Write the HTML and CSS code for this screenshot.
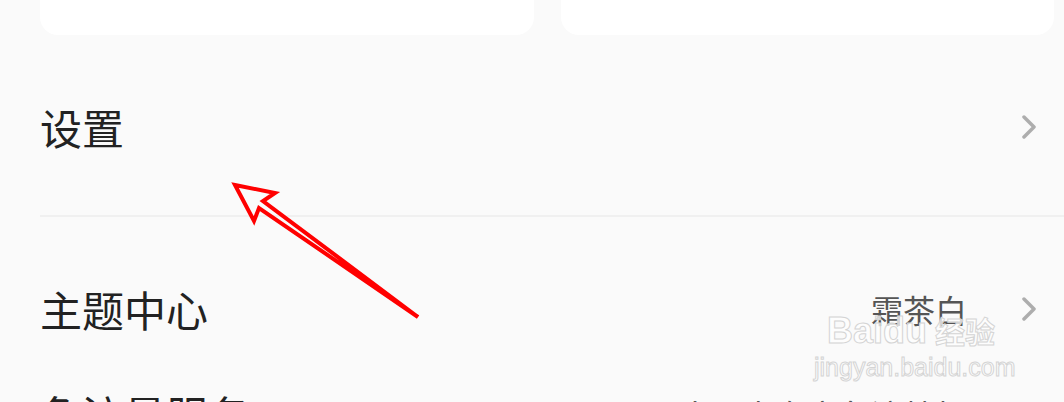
FILE: index.html
```html
<!DOCTYPE html>
<html lang="zh-CN">
<head>
  <meta charset="UTF-8" />
  <meta name="viewport" content="width=device-width, initial-scale=1.0"/>
  <title>我的</title>
  <link rel="stylesheet" href="styles.css">
</head>
<body>

  <div class="page">
    <div class="cards">
      <div class="card"></div>
      <div class="card"></div>
    </div>

    <div class="section">
      <a class="row" href="#">
        <span class="label">设置</span>
        <span class="chevron">
          <svg width="14" height="24" viewBox="0 0 14 24"><path d="M2 2 L12 12 L2 22" /></svg>
        </span>
      </a>
    </div>

    <div class="divider"></div>

    <div class="section">
      <a class="row" href="#">
        <span class="label">主题中心</span>
        <span class="value">霜茶白</span>
        <span class="chevron">
          <svg width="14" height="24" viewBox="0 0 14 24"><path d="M2 2 L12 12 L2 22" /></svg>
        </span>
      </a>
      <a class="row" href="#">
        <span class="label">免流量服务</span>
        <span class="value">大王卡专享免流特权</span>
        <span class="chevron">
          <svg width="14" height="24" viewBox="0 0 14 24"><path d="M2 2 L12 12 L2 22" /></svg>
        </span>
      </a>
    </div>

    <div class="watermark">
      <div class="wm-logo">Baidu<span class="wm-cn">经验</span></div>
      <div class="wm-site">jingyan.baidu.com</div>
    </div>

    <svg class="arrow" width="1064" height="402" viewBox="0 0 1064 402">
      <polygon points="235,185 275,193 263,201 418,317 259,208 254,221" />
    </svg>
  </div>

</body>
</html>
```

FILE: styles.css
```css
* {
  margin: 0;
  padding: 0;
  box-sizing: border-box;
  font-family: 'Noto Sans CJK SC', 'Noto Sans', sans-serif;
}

body {
  background-color: #fafafa;
  color: #222;
  overflow: hidden;
}

.page {
  position: relative;
  width: 1064px;
  height: 402px;
  overflow: hidden;
}

.cards {
  display: flex;
  gap: 27px;
  padding: 0 10px 0 40px;
  height: 35px;
}

.card {
  flex: 1;
  background-color: white;
  border-radius: 0 0 18px 18px;
}

.section {
  padding: 39px 0 36px;
}

.row {
  display: flex;
  align-items: center;
  height: 105px;
  padding: 0 28px 0 40px;
  text-decoration: none;
  color: #222;
}

.label {
  flex: 1;
  font-size: 42px;
  line-height: 1;
  white-space: nowrap;
}

.value {
  font-size: 32px;
  line-height: 1;
  color: #555;
  margin-right: 55px;
  white-space: nowrap;
}

.chevron {
  display: flex;
}

.chevron path {
  fill: none;
  stroke: #adadad;
  stroke-width: 3.5;
  stroke-linecap: round;
  stroke-linejoin: round;
}

.divider {
  height: 2px;
  margin-left: 40px;
  background-color: #f0f0f0;
}

.watermark {
  position: absolute;
  left: 814px;
  top: 310px;
  width: 194px;
  text-align: center;
  white-space: nowrap;
  color: rgba(255, 255, 255, 0.75);
  -webkit-text-stroke: 1px #d4d4d4;
}

.wm-logo {
  font-family: 'Liberation Sans', sans-serif;
  font-size: 36px;
  font-weight: bold;
  line-height: 40px;
}

.wm-cn {
  font-family: 'Noto Sans CJK SC', sans-serif;
  font-size: 30px;
  margin-left: 8px;
}

.wm-site {
  font-family: 'Liberation Sans', sans-serif;
  font-size: 25px;
  line-height: 32px;
}

.arrow {
  position: absolute;
  left: 0;
  top: 0;
}

.arrow polygon {
  fill: none;
  stroke: #ff0000;
  stroke-width: 4;
  stroke-linejoin: miter;
}
```
